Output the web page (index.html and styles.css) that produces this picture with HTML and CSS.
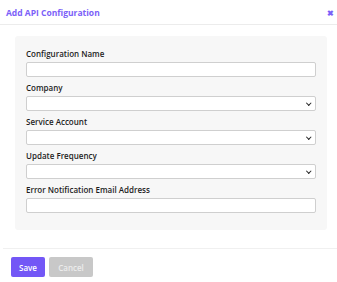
FILE: index.html
```html
<!DOCTYPE html>
<html lang="en">
<head>
    <meta charset="UTF-8">
    <meta name="viewport" content="width=device-width, initial-scale=1.0">
    <title>Add API Configuration</title>
    <link rel="stylesheet" href="styles.css">
</head>
<body>
    <div class="modal">
        <div class="modal-header">
            <h1 class="modal-title">Add API Configuration</h1>
            <span class="close">&#10006;</span>
        </div>

        <div class="modal-body">
            <div class="panel">
                <div class="field">
                    <label for="configName">Configuration Name</label>
                    <input type="text" id="configName">
                </div>
                <div class="field">
                    <label for="company">Company</label>
                    <div class="select"><select id="company"><option></option></select></div>
                </div>
                <div class="field">
                    <label for="serviceAccount">Service Account</label>
                    <div class="select"><select id="serviceAccount"><option></option></select></div>
                </div>
                <div class="field">
                    <label for="frequency">Update Frequency</label>
                    <div class="select"><select id="frequency"><option></option></select></div>
                </div>
                <div class="field">
                    <label for="errorEmail">Error Notification Email Address</label>
                    <input type="email" id="errorEmail">
                </div>
            </div>
        </div>

        <div class="modal-footer">
            <button class="btn btn-save">Save</button>
            <button class="btn btn-cancel" disabled>Cancel</button>
        </div>
    </div>
</body>
</html>
```

FILE: styles.css
```css
body {
    margin: 0;
    background-color: #fff;
    font-family: "Open Sans", "Noto Sans", sans-serif;
    color: #222;
}
.modal {
    width: 337px;
}
.modal-header {
    height: 24px;
    display: flex;
    align-items: center;
    justify-content: space-between;
    padding: 0 3px 0 6px;
    border-bottom: 1px solid #ececec;
}
.modal-title {
    margin: 0;
    font-size: 8.5px;
    font-weight: 700;
    color: #7b61f8;
}
.close {
    font-size: 8px;
    color: #7b61f8;
    font-weight: 700;
}
.modal-body {
    padding: 11px 10px 18px 15px;
}
.panel {
    background-color: #f7f7f7;
    border-radius: 3px;
    padding: 12px 11px 17px;
    display: flex;
    flex-direction: column;
    gap: 5px;
}
.field {
    display: flex;
    flex-direction: column;
}
.field label {
    font-size: 8px;
    font-weight: 600;
    line-height: 11px;
    margin-bottom: 3px;
    color: #1e1e1e;
}
.field input,
.field select {
    display: block;
    box-sizing: border-box;
    width: 100%;
    height: 15px;
    margin: 0;
    border: 1px solid #cfcfcf;
    border-radius: 2px;
    background-color: #fff;
    font: inherit;
    font-size: 8px;
    outline: none;
}
.select {
    position: relative;
    height: 15px;
}
.field select {
    appearance: none;
    -webkit-appearance: none;
    padding: 0 4px;
}
.select::after {
    content: "";
    position: absolute;
    right: 6px;
    top: 4.5px;
    width: 2.5px;
    height: 2.5px;
    border-right: 1.5px solid #222;
    border-bottom: 1.5px solid #222;
    transform: rotate(45deg);
    pointer-events: none;
}
.modal-footer {
    margin-left: 3px;
    border-top: 1px solid #f0f0f0;
    padding: 8px 8px;
    display: flex;
    gap: 4px;
}
.btn {
    height: 20px;
    border: none;
    border-radius: 2px;
    font-family: inherit;
    font-size: 8px;
    font-weight: 600;
    padding: 0 7px;
}
.btn-save {
    width: 34px;
    background-color: #7357f6;
    color: #fff;
}
.btn-cancel {
    width: 44px;
    background-color: #c8c8c8;
    color: #ececec;
}
```
